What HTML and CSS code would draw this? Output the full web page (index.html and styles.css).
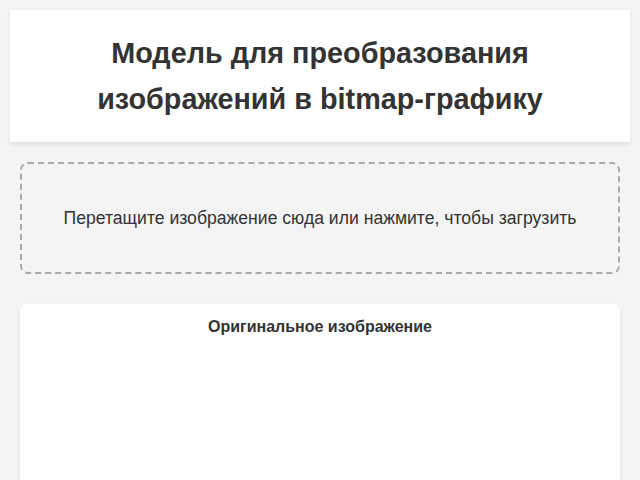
FILE: index.html
```html
<!DOCTYPE html>
<html lang="ru">
<head>
<meta charset="utf-8">
<title>Bitmap</title>
<link rel="stylesheet" href="styles.css">
</head>
<body>
<header class="header">
  <h1 class="title">Модель для преобразования изображений в bitmap-графику</h1>
</header>
<main class="main">
  <div class="upload">Перетащите изображение сюда или нажмите, чтобы загрузить</div>
  <section class="card">
    <h2 class="card-title">Оригинальное изображение</h2>
  </section>
</main>
</body>
</html>
```
FILE: styles.css
```css
html, body { margin: 0; padding: 0; }
body {
  background: #f4f4f4;
  font-family: "Liberation Sans", Arial, sans-serif;
  color: #333;
  padding: 10px;
}
.header {
  background: #fff;
  box-shadow: 0 2px 4px rgba(0,0,0,0.1);
  padding: 20px;
  text-align: center;
}
.title {
  margin: 0 auto;
  max-width: 480px;
  font-size: 28.8px;
  line-height: 46px;
  font-weight: bold;
  color: #333;
}
.main {
  padding: 20px 10px;
}
.upload {
  border: 2px dashed #aaa;
  border-radius: 8px;
  padding: 40px 20px;
  text-align: center;
  font-size: 17.6px;
  line-height: 28px;
  color: #333;
}
.card {
  margin-top: 30px;
  background: #fff;
  border-radius: 8px;
  box-shadow: 0 2px 5px rgba(0,0,0,0.08);
  padding: 13px 20px;
  height: 300px;
}
.card-title {
  margin: 0;
  text-align: center;
  font-size: 16px;
  line-height: 20px;
  font-weight: bold;
}
```
